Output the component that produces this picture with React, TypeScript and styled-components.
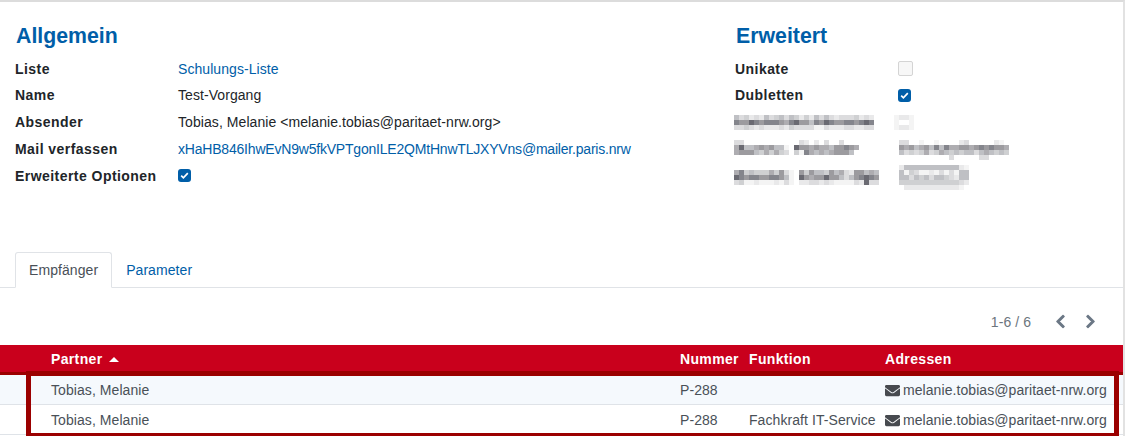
import React from "react";
import styled, { createGlobalStyle } from "styled-components";
import { FaEnvelope, FaChevronLeft, FaChevronRight } from "react-icons/fa";

const Global = createGlobalStyle`
  html, body { margin: 0; padding: 0; background: #fff; }
  body { font-family: "Liberation Sans", Arial, sans-serif; font-size: 14px; letter-spacing: 0.07px; color: #212529; }
`;

const Page = styled.div`
  position: relative;
  width: 1125px;
  height: 436px;
  box-sizing: border-box;
  overflow: hidden;
  border-top: 2px solid #dcdcdc;
  border-right: 2px solid #e2e2e2;
  display: flex;
  flex-direction: column;
`;
const Columns = styled.div`
  display: grid;
  grid-template-columns: 720px 1fr;
  padding: 20px 0 0 15px;
  height: 250px;
  box-sizing: border-box;
`;
const Section = styled.section``;
const Heading = styled.h2`
  margin: 0 0 5.25px 1px;
  font-size: 21.3px;
  line-height: 28px;
  font-weight: 700;
  letter-spacing: 0;
  color: #005ea8;
`;
const Row = styled.div`
  display: grid;
  grid-template-columns: 163px 1fr;
  height: 26.75px;
  align-items: center;
`;
const Label = styled.div`
  font-weight: 700;
  font-size: 14px;
  letter-spacing: 0.45px;
  color: #212529;
  white-space: nowrap;
`;
const Value = styled.div`
  color: #212529;
  white-space: nowrap;
`;
const Link = styled.a<{ $tight?: boolean }>`
  color: #005ea8;
  text-decoration: none;
  white-space: nowrap;
  letter-spacing: ${(p) => (p.$tight ? "-0.2px" : "0.07px")};
`;
const CheckBox = styled.span<{ $on?: boolean }>`
  box-sizing: border-box;
  width: ${(p) => (p.$on ? 13 : 15)}px;
  height: ${(p) => (p.$on ? 13 : 15)}px;
  border-radius: ${(p) => (p.$on ? 3 : 2)}px;
  background: ${(p) => (p.$on ? "#005ea8" : "#f7f7f7")};
  border: ${(p) => (p.$on ? "none" : "1px solid #d4d4d4")};
  display: flex;
  align-items: center;
  justify-content: center;
`;
const Check = () => (
  <svg width="9" height="9" viewBox="0 0 9 9">
    <path d="M1.2 4.6 3.4 6.8 7.8 2.2" fill="none" stroke="#fff" strokeWidth="1.7" />
  </svg>
);

const Tabs = styled.div`
  display: flex;
  height: 35px;
  padding-left: 15px;
  border-bottom: 1px solid #e0e3e7;
`;
const Tab = styled.div<{ $active?: boolean }>`
  box-sizing: border-box;
  height: 36px;
  padding: 0 13px;
  line-height: 35px;
  border: 1px solid ${(p) => (p.$active ? "#e0e3e7" : "transparent")};
  border-bottom: 1px solid ${(p) => (p.$active ? "#fff" : "transparent")};
  border-radius: 3px 3px 0 0;
  color: ${(p) => (p.$active ? "#495057" : "#005ea8")};
  background: ${(p) => (p.$active ? "#fff" : "transparent")};
`;
const Pager = styled.div`
  height: 57px;
  display: flex;
  align-items: center;
  justify-content: flex-end;
  padding: 10px 25px 0 0;
  box-sizing: border-box;
  color: #6c757d;
`;
const Count = styled.span`
  margin-right: 7px;
`;
const PagerIcon = styled.span`
  display: flex;
  color: #6b7785;
  font-size: 15px;
  margin-left: 15px;
  svg { stroke: currentColor; stroke-width: 30px; }
`;
const tableColumns = "51px 629px 69px 136px 1fr";
const HeadRow = styled.div`
  display: grid;
  grid-template-columns: ${tableColumns};
  height: 30px;
  padding-top: 1px;
  box-sizing: border-box;
  background: #c9001c;
  border-bottom: 3px solid #9b0000;
  align-items: center;
  color: #fff;
  font-weight: 700;
  font-size: 14px;
  letter-spacing: 0.35px;
`;
const HeadCell = styled.div`
  display: flex;
  align-items: center;
  white-space: nowrap;
`;
const SortCaret = styled.span`
  width: 0;
  height: 0;
  margin-left: 7px;
  border-left: 5px solid transparent;
  border-right: 5px solid transparent;
  border-bottom: 5px solid #fff;
`;
const BodyRow = styled.div<{ $tint?: boolean }>`
  display: grid;
  grid-template-columns: ${tableColumns};
  height: 30px;
  box-sizing: border-box;
  padding-top: 1px;
  align-items: center;
  color: #495057;
  background: ${(p) => (p.$tint ? "#f5f9fd" : "#fff")};
  border-bottom: 1px solid #dfe3e8;
  white-space: nowrap;
`;
const Cell = styled.div``;
const MailCell = styled.div`
  display: flex;
  align-items: center;
  gap: 3px;
`;
const Mail = styled(FaEnvelope)`
  width: 15px;
  height: 15px;
  color: #474a4f;
`;
const Highlight = styled.div`
  position: absolute;
  left: 26px;
  top: 369px;
  width: 1093px;
  height: 65px;
  box-sizing: border-box;
  border: 5px solid #9b0000;
  border-bottom-width: 3px;
`;

const MosaicSvg = styled.svg<{ $dx: number; $dy: number }>`
  display: block;
  margin-left: ${(p) => p.$dx}px;
  margin-top: ${(p) => p.$dy}px;
`;
const palette = ["#ffffff", "#f4f4f4", "#e9e9ea", "#dcdcde", "#cfd0d2", "#bfc0c4", "#aeadb1", "#9c9b9f", "#84858c", "#6a6a72"];
const Mosaic: React.FC<{ rows: string[]; dx?: number; dy?: number }> = ({ rows, dx = 0, dy = 0 }) => {
  const cell = 5;
  const w = Math.max(...rows.map((r) => r.length)) * cell;
  return (
    <MosaicSvg $dx={dx} $dy={dy} width={w} height={rows.length * cell} shapeRendering="crispEdges" aria-hidden="true">
      {rows.flatMap((r, y) =>
        r.split("").map((c, x) =>
          c === "0" ? null : <rect key={`${x}-${y}`} x={x * cell} y={y * cell} width={cell} height={cell} fill={palette[+c]} />
        )
      )}
    </MosaicSvg>
  );
};

const addressLabel = [
  "5342325345354242535323334232",
  "8779878887689775879877887898",
  "3343232223243333113222332233",
];
const addressValue = ["1221", "1001", "1221"];
const roleLabel = [
  "3300000000000320203003000",
  "6955676755109776766577876",
  "6777546464304186565677750",
];
const roleValue = [
  "3300100100002300000210",
  "7675675858667767878776",
  "5343463465454553565454",
  "0000000000300000330000",
];
const adminLabel = [
  "68454446473107475547563277565",
  "98788778875109767797753578987",
  "34112111213102233232111132933",
];
const adminValue = [
  "25555555555521",
  "51431121313155",
  "55354535543255",
  "44444444444432",
  "02222222222210",
];

const App: React.FC = () => (
  <>
    <Global />
    <Page>
      <Columns>
        <Section>
          <Heading>Allgemein</Heading>
          <Row><Label>Liste</Label><Link>Schulungs-Liste</Link></Row>
          <Row><Label>Name</Label><Value>Test-Vorgang</Value></Row>
          <Row><Label>Absender</Label><Value>Tobias, Melanie &lt;melanie.tobias@paritaet-nrw.org&gt;</Value></Row>
          <Row><Label>Mail verfassen</Label><Link $tight>xHaHB846IhwEvN9w5fkVPTgonILE2QMtHnwTLJXYVns@mailer.paris.nrw</Link></Row>
          <Row><Label>Erweiterte Optionen</Label><CheckBox $on><Check /></CheckBox></Row>
        </Section>
        <Section>
          <Heading>Erweitert</Heading>
          <Row><Label>Unikate</Label><CheckBox /></Row>
          <Row><Label>Dubletten</Label><CheckBox $on><Check /></CheckBox></Row>
          <Row><Mosaic rows={addressLabel} dx={-1} /><Mosaic rows={addressValue} dx={-4} /></Row>
          <Row><Mosaic rows={roleLabel} dx={-1} dy={-3} /><Mosaic rows={roleValue} dx={1} dy={2} /></Row>
          <Row><Mosaic rows={adminLabel} dx={-1} dy={3} /><Mosaic rows={adminValue} dx={1} dy={3} /></Row>
        </Section>
      </Columns>
      <Tabs>
        <Tab $active>Empfänger</Tab>
        <Tab>Parameter</Tab>
      </Tabs>
      <Pager>
        <Count>1-6 / 6</Count>
        <PagerIcon><FaChevronLeft /></PagerIcon>
        <PagerIcon><FaChevronRight /></PagerIcon>
      </Pager>
      <HeadRow>
        <span />
        <HeadCell>Partner<SortCaret /></HeadCell>
        <HeadCell>Nummer</HeadCell>
        <HeadCell>Funktion</HeadCell>
        <HeadCell>Adressen</HeadCell>
      </HeadRow>
      <BodyRow $tint>
        <span />
        <Cell>Tobias, Melanie</Cell>
        <Cell>P-288</Cell>
        <Cell />
        <MailCell><Mail />melanie.tobias@paritaet-nrw.org</MailCell>
      </BodyRow>
      <BodyRow>
        <span />
        <Cell>Tobias, Melanie</Cell>
        <Cell>P-288</Cell>
        <Cell>Fachkraft IT-Service</Cell>
        <MailCell><Mail />melanie.tobias@paritaet-nrw.org</MailCell>
      </BodyRow>
      <Highlight />
    </Page>
  </>
);

export default App;
